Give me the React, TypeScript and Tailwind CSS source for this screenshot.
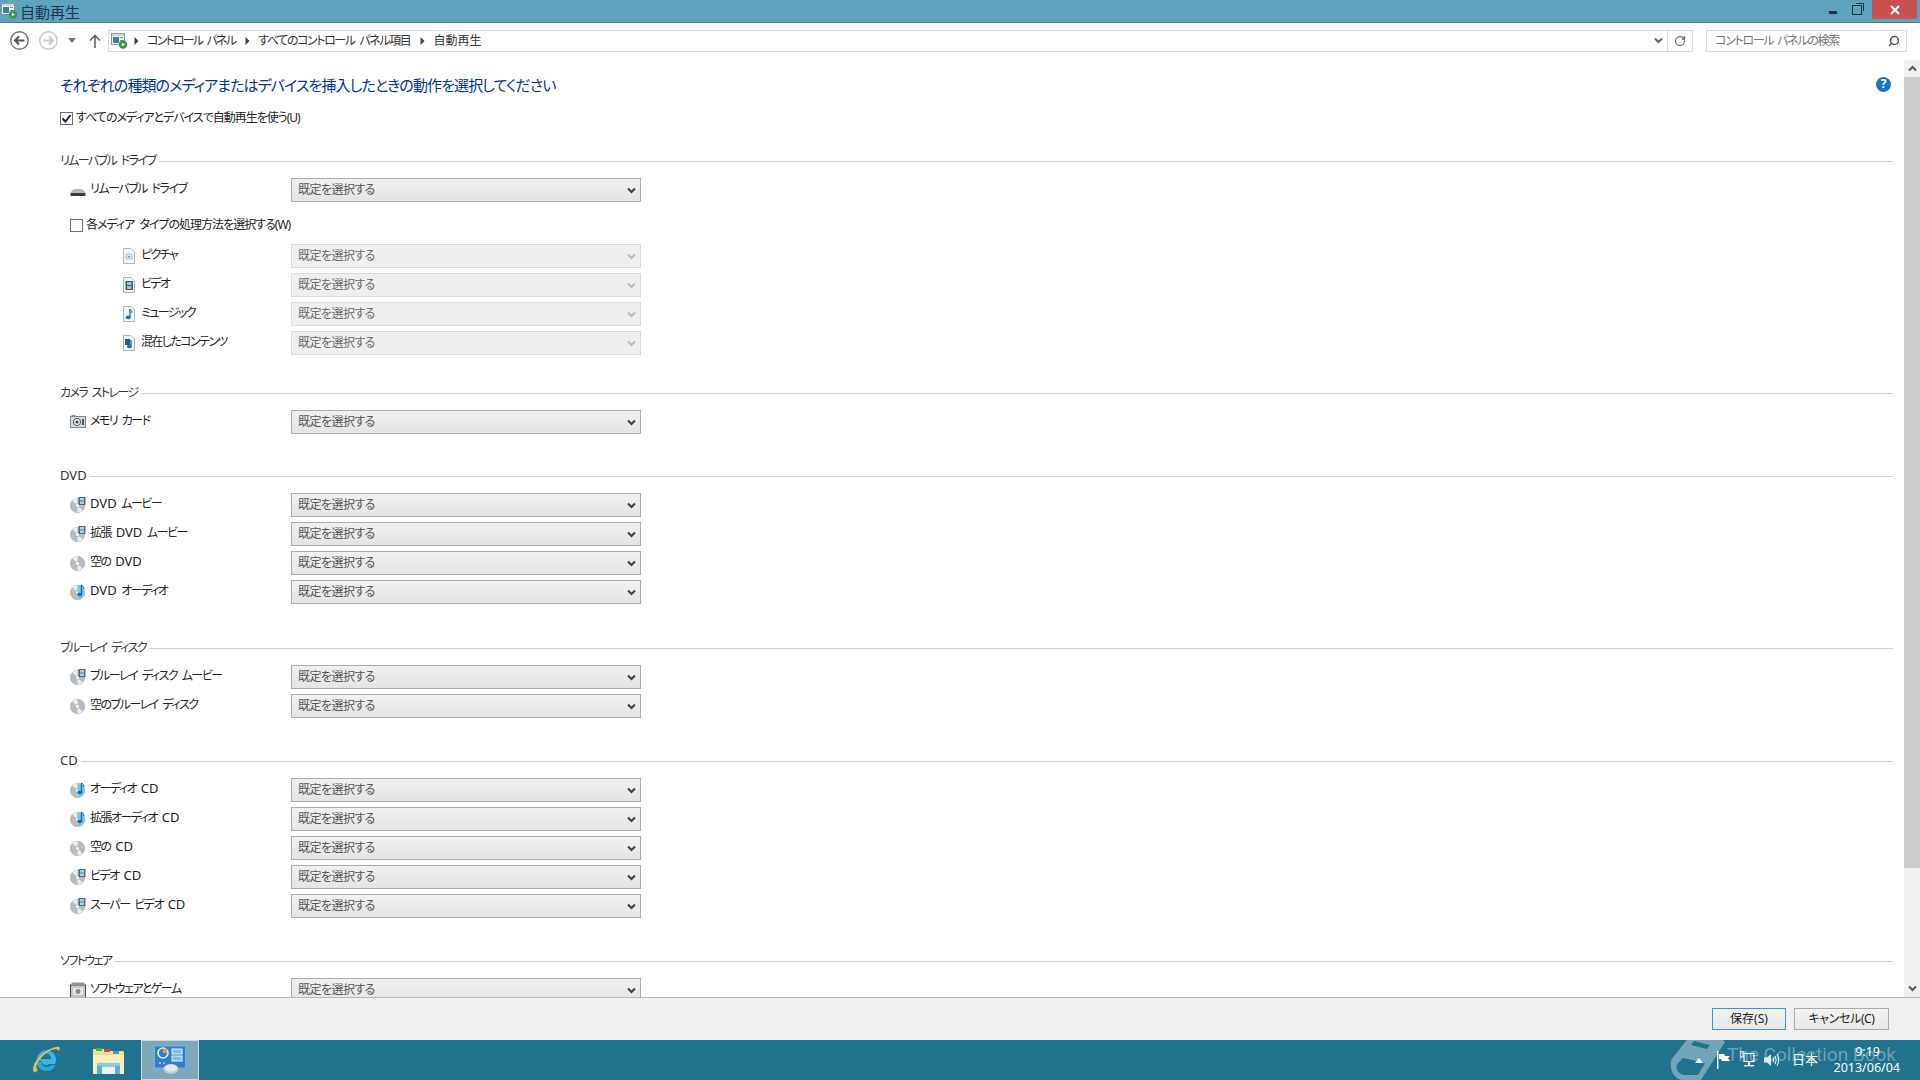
import { ChevronDown, RotateCw, Search } from "lucide-react";

type RowIcon = "drive" | "camera" | "film" | "blank" | "music" | "box";
type DocIcon = "picture" | "video" | "audio" | "mixed";

const FONT = "font-['Noto_Sans','Noto_Sans_CJK_JP',sans-serif] [font-feature-settings:'palt']";

function AppIcon() {
  return (
    <svg width="17" height="16" viewBox="0 0 17 16" className="shrink-0">
      <rect x="0.5" y="0.5" width="13" height="11" fill="#f4f6f8" stroke="#8b98a3" />
      <rect x="1" y="1" width="12" height="2" fill="#cfd8df" />
      <rect x="2" y="4" width="6" height="6" fill="#3f7f9b" />
      <rect x="9" y="4" width="3" height="1" fill="#7d8d99" />
      <rect x="9" y="7" width="3" height="1" fill="#7d8d99" />
      <circle cx="12" cy="11.5" r="4.2" fill="#2f9d3a" />
      <path d="M10.8 9.4 L14 11.5 L10.8 13.6 Z" fill="#fff" />
    </svg>
  );
}

function DiscBase() {
  return (
    <>
      <circle cx="7.5" cy="8.5" r="7.2" fill="#b9bcbe" stroke="#a2a5a7" strokeWidth="0.6" />
      <path d="M7.5 8.5 L2.5 3.4 A7.2 7.2 0 0 1 7.5 1.3 Z" fill="#eceeef" />
      <path d="M7.5 8.5 L12.5 13.6 A7.2 7.2 0 0 1 7.5 15.7 Z" fill="#eceeef" />
      <circle cx="7.5" cy="8.5" r="2" fill="#fff" stroke="#9a9d9f" strokeWidth="0.6" />
    </>
  );
}

function Icon({ kind }: { kind: RowIcon }) {
  if (kind === "drive") {
    return (
      <svg width="16" height="16" viewBox="0 0 16 16">
        <path d="M0.5 11 Q2 7.5 5 7 L11 7 Q14 7.5 15.5 11 Z" fill="#b9b9b9" />
        <rect x="0.5" y="11" width="15" height="3" rx="0.6" fill="#3b3b3b" />
      </svg>
    );
  }
  if (kind === "camera") {
    return (
      <svg width="16" height="16" viewBox="0 0 16 16">
        <rect x="0.5" y="2.5" width="15" height="11" fill="#d4dadf" stroke="#7d868d" />
        <rect x="1.5" y="1" width="4" height="2" fill="#8a9299" />
        <circle cx="7" cy="8" r="3.6" fill="#f3f5f6" stroke="#4d565d" />
        <circle cx="7" cy="8" r="1.6" fill="#3f484f" />
        <rect x="12" y="5" width="2" height="6" fill="#4d565d" />
      </svg>
    );
  }
  if (kind === "box") {
    return (
      <svg width="16" height="16" viewBox="0 0 16 16">
        <rect x="0.5" y="3" width="15" height="12.5" fill="#c3c8c4" stroke="#3d4245" />
        <rect x="1.5" y="0.5" width="13" height="3" fill="#8d9498" />
        <rect x="3" y="6" width="10" height="7" fill="#e8e6d8" />
        <circle cx="8" cy="9.5" r="2.4" fill="#7f8a83" />
      </svg>
    );
  }
  return (
    <svg width="16" height="16" viewBox="0 0 16 16">
      <DiscBase />
      {kind === "film" && (
        <>
          <rect x="8.5" y="0" width="7" height="8" fill="#4a6a85" />
          <rect x="10" y="1" width="4" height="2.6" fill="#b4cfe3" />
          <rect x="10" y="4.4" width="4" height="2.6" fill="#b4cfe3" />
        </>
      )}
      {kind === "music" && (
        <>
          <path d="M7.5 1.3 A7.2 7.2 0 0 1 14.7 8.5 A7.2 7.2 0 0 1 7.5 15.7 Z" fill="#7cc4ec" />
          <path d="M11.5 1 L11.5 10" stroke="#0f6fb0" strokeWidth="1.4" />
          <ellipse cx="9.8" cy="10.5" rx="2.4" ry="1.8" fill="#0f6fb0" />
          <path d="M11.5 1 Q14.5 2.5 14 5" stroke="#0f6fb0" strokeWidth="1" fill="none" />
        </>
      )}
    </svg>
  );
}

function PageIcon({ kind }: { kind: DocIcon }) {
  return (
    <svg width="14" height="16" viewBox="0 0 14 16">
      <path d="M1.5 0.5 H9 L12.5 4 V15.5 H1.5 Z" fill="#f5f6f7" stroke="#aeb4b8" />
      {kind === "picture" && (
        <>
          <rect x="4" y="6" width="6" height="5" fill="#dfe5ea" stroke="#9aa7b1" strokeWidth="0.6" />
          <rect x="6" y="8" width="2" height="1.5" fill="#7e97aa" />
        </>
      )}
      {kind === "video" && (
        <>
          <rect x="3.5" y="4" width="7.5" height="9" fill="#37566f" />
          <rect x="5" y="5" width="4.5" height="3" fill="#9fc0d8" />
          <rect x="5" y="9" width="4.5" height="3" fill="#9fc0d8" />
        </>
      )}
      {kind === "audio" && (
        <>
          <path d="M8 3 V11" stroke="#1877b8" strokeWidth="1.4" />
          <ellipse cx="6.2" cy="11.4" rx="2.5" ry="1.9" fill="#1877b8" />
          <path d="M8 3 Q10.5 4.5 10 7" stroke="#1877b8" strokeWidth="1" fill="none" />
        </>
      )}
      {kind === "mixed" && (
        <>
          <rect x="3" y="4" width="5" height="6" fill="#37566f" />
          <path d="M9 5 V11" stroke="#1877b8" strokeWidth="1.4" />
          <ellipse cx="7.4" cy="11.4" rx="2.4" ry="1.9" fill="#1877b8" />
        </>
      )}
    </svg>
  );
}

function SmallChevron({ className }: { className?: string }) {
  return (
    <svg width="9" height="7" viewBox="0 0 9 7" className={className}>
      <path d="M1 1.5 L4.5 5 L8 1.5" stroke="currentColor" strokeWidth="2" fill="none" />
    </svg>
  );
}

// latin words sit a bit larger than the narrow kana in the original UI font
function Label({ text, tracking }: { text: string; tracking: string }) {
  return (
    <span className={`[word-spacing:3px] ${tracking}`}>
      {text.split(/([A-Za-z]+)/).map((part, i) =>
        /^[A-Za-z]+$/.test(part) ? (
          <span key={i} className="text-[13px] tracking-normal">
            {part}
          </span>
        ) : (
          <span key={i}>{part}</span>
        ),
      )}
    </span>
  );
}

function Dropdown({ disabled }: { disabled?: boolean }) {
  return (
    <div
      className={
        disabled
          ? "ml-auto flex h-6 w-[350px] shrink-0 items-center justify-between border border-[#dadada] bg-[#efefef] pl-[6px] pr-[4px] text-xs text-[#6a6a6a]"
          : "ml-auto flex h-6 w-[350px] shrink-0 items-center justify-between border border-[#acacac] bg-gradient-to-b from-[#f1f1f1] to-[#e4e4e4] pl-[6px] pr-[4px] text-xs text-[#555]"
      }
    >
      <span className="tracking-[-0.55px]">既定を選択する</span>
      <SmallChevron className={disabled ? "text-[#bcbcbc]" : "text-[#3f3f3f]"} />
    </div>
  );
}

function Row({ icon, label }: { icon: RowIcon; label: string }) {
  return (
    <div className="flex h-6 w-[581px] items-center pl-[10px] text-xs text-[#222]">
      <div className="flex h-4 w-4 shrink-0 items-center justify-center">
        <Icon kind={icon} />
      </div>
      <span className="ml-1 -translate-y-px">
        <Label text={label} tracking="tracking-[-1.5px]" />
      </span>
      <Dropdown />
    </div>
  );
}

function DocRow({ icon, label }: { icon: DocIcon; label: string }) {
  return (
    <div className="flex h-6 w-[581px] items-center pl-[62px] text-xs text-[#222]">
      <PageIcon kind={icon} />
      <span className="ml-[5px] -translate-y-px tracking-[-1.6px]">{label}</span>
      <Dropdown disabled />
    </div>
  );
}

function Heading({ title }: { title: string }) {
  return (
    <div className="flex h-5 items-center gap-[3px] text-xs text-[#333]">
      <Label text={title} tracking="tracking-[-1.6px]" />
      <div className="h-px flex-1 bg-[#d2d2d2]" />
    </div>
  );
}

function Check({ checked }: { checked?: boolean }) {
  return (
    <div className="flex h-[13px] w-[13px] shrink-0 items-center justify-center border border-[#707070] bg-white">
      {checked && (
        <svg width="11" height="11" viewBox="0 0 11 11">
          <path d="M1.5 5.5 L4.5 8.5 L9.5 2" stroke="#222" strokeWidth="2" fill="none" />
        </svg>
      )}
    </div>
  );
}

function Section({ title, rows, className }: { title: string; rows: [RowIcon, string][]; className: string }) {
  return (
    <div className={className}>
      <Heading title={title} />
      <div className="mt-[7px] flex flex-col gap-[5px]">
        {rows.map((r) => (
          <Row key={r[1]} icon={r[0]} label={r[1]} />
        ))}
      </div>
    </div>
  );
}

function Crumb() {
  return (
    <svg width="5" height="8" viewBox="0 0 5 8" className="shrink-0">
      <path d="M0.5 0 L4.5 4 L0.5 8 Z" fill="#444" />
    </svg>
  );
}

function NavCircle({ dim, flip }: { dim?: boolean; flip?: boolean }) {
  const c = dim ? "#c4c8cc" : "#6f7478";
  return (
    <svg width="19" height="19" viewBox="0 0 19 19" className={flip ? "shrink-0 rotate-180" : "shrink-0"}>
      <circle cx="9.5" cy="9.5" r="8.7" fill="#fff" stroke={c} strokeWidth="1.4" />
      <path d="M14.5 9.5 H5.5 M9 5.5 L5 9.5 L9 13.5" stroke={dim ? "#c4c8cc" : "#555"} strokeWidth="2" fill="none" />
    </svg>
  );
}

function IeIcon() {
  return (
    <svg width="30" height="30" viewBox="0 0 30 30">
      <path d="M6 15 A9.5 9.5 0 1 1 24 19 L18 19 A4.5 4.5 0 0 1 10.5 16 Z" fill="#39b5ec" />
      <path
        d="M10 13.5 H20 A5.2 5.2 0 0 0 10 13.5 Z M7 17 H11 A5 5 0 0 0 20 20 H24.5 A9.8 9.8 0 0 1 6 19 Z"
        fill="#2aa6e2"
      />
      <rect x="10" y="12" width="10" height="2" fill="#1f6f8c" />
      <path d="M11 11 A4.5 4.5 0 0 1 19.5 12 H11 Z" fill="#1f7290" />
      <path
        d="M3 27 C-1 23 8 6 25 2 C29 1 29.5 3 28 6 C26 3 20 4 14 9 C7 15 3 23 7 25 C5 27 4 28 3 27 Z"
        fill="#e2c24c"
      />
    </svg>
  );
}

function FolderIcon() {
  return (
    <svg width="33" height="29" viewBox="0 0 33 29">
      <path d="M1 3 H13 L15 5 H31 Q32 5 32 7 V27 Q32 28 31 28 H2 Q1 28 1 27 Z" fill="#f3dd98" />
      <rect x="1" y="9" width="31" height="19" rx="1" fill="#fbeeb9" />
      <rect x="4" y="2" width="6" height="3" fill="#3fb24a" />
      <rect x="12" y="3" width="6" height="3" fill="#c94a3e" />
      <rect x="21" y="5" width="6" height="3" fill="#3b9edb" />
      <rect x="5" y="17" width="23" height="4" fill="#8fc8e8" />
      <rect x="5" y="20" width="5" height="8" fill="#5faed8" />
      <rect x="23" y="20" width="5" height="8" fill="#5faed8" />
      <rect x="10" y="23" width="13" height="5" fill="#eaf2f4" />
    </svg>
  );
}

function PanelIcon() {
  return (
    <svg width="32" height="30" viewBox="0 0 32 30">
      <rect x="0.5" y="1" width="31" height="22" fill="#2f7fcb" stroke="#6fb3e6" />
      <circle cx="9" cy="8" r="5" fill="none" stroke="#dff0fb" strokeWidth="1.6" />
      <circle cx="11" cy="6" r="2.4" fill="#f09a3c" />
      <rect x="18" y="4" width="10" height="5" fill="#7cc0ee" stroke="#e6f4fc" />
      <rect x="18" y="11" width="10" height="5" fill="#7cc0ee" stroke="#e6f4fc" />
      <circle cx="6" cy="18" r="1" fill="#f3d268" />
      <circle cx="10" cy="18" r="1" fill="#9fd8f5" />
      <ellipse cx="17" cy="24" rx="7.5" ry="5" fill="#c9ccce" />
      <ellipse cx="17" cy="23" rx="6" ry="3.4" fill="#e4e6e7" />
    </svg>
  );
}

function TrayIcons() {
  return (
    <div className="flex items-center">
      <svg width="8" height="5" viewBox="0 0 8 5" className="mt-px">
        <path d="M0 5 L4 0 L8 5 Z" fill="#fff" />
      </svg>
      <svg width="14" height="18" viewBox="0 0 14 18" className="ml-[14px]">
        <rect x="0" y="0" width="1.4" height="18" fill="#fff" />
        <path d="M2 3 H7 L8 5 H13 L11 7.5 L13 10 H5 L4 8 H2 Z" fill="#fff" />
      </svg>
      <svg width="15" height="18" viewBox="0 0 15 18" className="ml-[9px]">
        <rect x="4" y="2.5" width="10" height="8" fill="none" stroke="#fff" strokeWidth="1.2" />
        <rect x="0" y="0" width="3" height="6" fill="none" stroke="#fff" />
        <rect x="8" y="10" width="2" height="4" fill="#fff" />
        <rect x="4" y="14" width="10" height="1.4" fill="#fff" />
      </svg>
      <svg width="16" height="16" viewBox="0 0 16 16" className="ml-[9px]">
        <path d="M0 5.5 H3 L7 2 V14 L3 10.5 H0 Z" fill="#d9e6ec" />
        <path d="M9 5.5 Q10.5 8 9 10.5 M11 3.8 Q13.5 8 11 12.2 M13 2.2 Q16.2 8 13 13.8" stroke="#fff" fill="none" />
      </svg>
    </div>
  );
}

function Watermark() {
  return (
    <div className="pointer-events-none absolute bottom-0 right-[24px] flex h-[48px] items-start gap-[2px] overflow-hidden">
      <svg width="56" height="48" viewBox="0 0 56 48" className="opacity-40">
        <path
          d="M24 0 L52 6 L56 10 L32 48 L12 48 Q0 44 2 28 Z M25 9 L41 13 L38 17 L22 13 Z M8 32 Q6 40 14 43 L29 43 L36 31 L14 26 Z"
          fill="#eef3f5"
          fillRule="evenodd"
        />
      </svg>
      <span className="mt-[9px] font-['Roboto',sans-serif] text-[19px] leading-7 text-white/35">
        The Collection Book
      </span>
    </div>
  );
}

export default function App() {
  return (
    <div className={`relative flex h-screen w-[1920px] flex-col overflow-hidden bg-white ${FONT}`}>
      {/* title bar */}
      <div className="flex h-[23px] shrink-0 items-start border-b border-[#4a8198] bg-[#5ea3bd]">
        <div className="ml-[1px] mt-[3px]">
          <AppIcon />
        </div>
        <span className="ml-[2px] text-[15px] leading-[24px] text-[#17394a]">自動再生</span>
        <div className="ml-auto flex items-start">
          <div className="mr-[15px] mt-[11px] h-[3px] w-[8px] bg-[#22303a]" />
          <div className="relative mr-[10px] mt-[5px] h-[10px] w-[10px] border border-[#22303a]">
            <div className="absolute -right-[3px] -top-[3px] h-[8px] w-[8px] border border-b-0 border-l-0 border-[#22303a]" />
          </div>
          <div className="mr-[3px] flex h-[19px] w-[45px] items-center justify-center bg-[#c75050]">
            <svg width="10" height="10" viewBox="0 0 10 10">
              <path d="M1 1 L9 9 M9 1 L1 9" stroke="#fff" strokeWidth="2" />
            </svg>
          </div>
        </div>
      </div>

      {/* address bar */}
      <div className="flex h-[35px] shrink-0 items-center bg-white text-xs text-[#333]">
        <div className="ml-[10px]">
          <NavCircle />
        </div>
        <div className="ml-[10px]">
          <NavCircle dim flip />
        </div>
        <svg width="8" height="5" viewBox="0 0 8 5" className="ml-[10px]">
          <path d="M0 0 H8 L4 5 Z" fill="#777" />
        </svg>
        <svg width="12" height="14" viewBox="0 0 12 14" className="ml-[13px]">
          <path d="M6 14 V2 M1 6.5 L6 1.5 L11 6.5" stroke="#666" strokeWidth="1.6" fill="none" />
        </svg>
        <div className="ml-[7px] flex h-[22px] w-[1585px] items-center border border-[#d9d9e2]">
          <div className="ml-[2px]">
            <AppIcon />
          </div>
          <div className="ml-[6px]">
            <Crumb />
          </div>
          <span className="ml-[8px] tracking-[-1.8px] [word-spacing:3px]">コントロール パネル</span>
          <div className="ml-[10px]">
            <Crumb />
          </div>
          <span className="ml-[8px] tracking-[-1.4px] [word-spacing:3px]">すべてのコントロール パネル項目</span>
          <div className="ml-[10px]">
            <Crumb />
          </div>
          <span className="ml-[8px]">自動再生</span>
          <SmallChevron className="ml-auto mr-[4px] text-[#666]" />
          <div className="flex h-full w-[25px] items-center justify-center border-l border-[#d9d9e2]">
            <RotateCw size={12} strokeWidth={2.5} className="text-[#666]" />
          </div>
        </div>
        <div className="ml-[13px] flex h-[22px] w-[201px] items-center justify-between border border-[#d9d9e2] pl-2 pr-[6px] text-[#777]">
          <span className="tracking-[-1.3px] [word-spacing:2px]">コントロール パネルの検索</span>
          <Search size={12} strokeWidth={3} className="-scale-x-100 text-[#555]" />
        </div>
      </div>

      {/* main content */}
      <div className="flex min-h-0 flex-1">
        <div className="flex-1 overflow-hidden pl-[60px] pr-[11px] pt-[15px]">
          <div className="flex h-6 items-center justify-between">
            <span className="text-[15px] tracking-[-0.9px] text-[#003399]">
              それぞれの種類のメディアまたはデバイスを挿入したときの動作を選択してください
            </span>
            <div className="mr-[2px] flex h-[15px] w-[15px] -translate-y-px items-center justify-center rounded-full bg-[#1b75c4] text-[12px] font-bold leading-none text-white">
              ?
            </div>
          </div>
          <div className="mt-[11px] flex h-5 items-center gap-[3px] text-xs text-[#222]">
            <Check checked />
            <span className="tracking-[-1px]">すべてのメディアとデバイスで自動再生を使う(U)</span>
          </div>

          <div className="mt-[23px]">
            <Heading title="リムーバブル ドライブ" />
            <div className="mt-[7px]">
              <Row icon="drive" label="リムーバブル ドライブ" />
            </div>
            <div className="mt-[13px] flex h-5 items-center gap-[3px] pl-[10px] text-xs text-[#222]">
              <Check />
              <span className="tracking-[-1px] [word-spacing:3px]">各メディア タイプの処理方法を選択する(W)</span>
            </div>
            <div className="mt-[9px] flex flex-col gap-[5px]">
              <DocRow icon="picture" label="ピクチャ" />
              <DocRow icon="video" label="ビデオ" />
              <DocRow icon="audio" label="ミュージック" />
              <DocRow icon="mixed" label="混在したコンテンツ" />
            </div>
          </div>

          <Section className="mt-[28px]" title="カメラ ストレージ" rows={[["camera", "メモリ カード"]]} />
          <Section
            className="mt-[32px]"
            title="DVD"
            rows={[
              ["film", "DVD ムービー"],
              ["film", "拡張 DVD ムービー"],
              ["blank", "空の DVD"],
              ["music", "DVD オーディオ"],
            ]}
          />
          <Section
            className="mt-[34px]"
            title="ブルーレイ ディスク"
            rows={[
              ["film", "ブルーレイ ディスク ムービー"],
              ["blank", "空のブルーレイ ディスク"],
            ]}
          />
          <Section
            className="mt-[33px]"
            title="CD"
            rows={[
              ["music", "オーディオ CD"],
              ["music", "拡張オーディオ CD"],
              ["blank", "空の CD"],
              ["film", "ビデオ CD"],
              ["film", "スーパー ビデオ CD"],
            ]}
          />
          <Section className="mt-[33px]" title="ソフトウェア" rows={[["box", "ソフトウェアとゲーム"]]} />
        </div>

        {/* scrollbar */}
        <div className="mt-[2px] flex w-4 shrink-0 flex-col bg-[#f0f0f0]">
          <div className="flex h-[17px] items-center justify-center">
            <SmallChevron className="rotate-180 text-[#555]" />
          </div>
          <div className="h-[791px] bg-[#cdcdcd]" />
          <div className="mt-auto flex h-[17px] items-center justify-center">
            <SmallChevron className="text-[#555]" />
          </div>
        </div>
      </div>

      {/* footer */}
      <div className="flex h-[43px] shrink-0 items-center justify-end gap-2 border-t border-[#b9b9b9] bg-[#f0f0f0] pr-[31px] text-xs text-[#222]">
        <div className="flex h-[22px] w-[74px] items-center justify-center border border-[#3a95dd] bg-gradient-to-b from-[#f4f4f4] to-[#e8e8e8]">
          保存(S)
        </div>
        <div className="flex h-[22px] w-[95px] items-center justify-center border border-[#acacac] bg-gradient-to-b from-[#f4f4f4] to-[#e8e8e8] tracking-[-0.4px]">
          キャンセル(C)
        </div>
      </div>

      {/* taskbar */}
      <div className="relative flex h-10 shrink-0 items-center gap-1 bg-[#20728f] pl-[17px] text-white">
        <div className="flex h-full w-[58px] items-center justify-center">
          <IeIcon />
        </div>
        <div className="flex h-full w-[58px] items-center justify-center">
          <FolderIcon />
        </div>
        <div className="flex h-full w-[58px] items-center justify-center border border-[#c5dbe4] bg-[#7ea9ba]">
          <PanelIcon />
        </div>
        <div className="ml-auto flex items-center pr-5">
          <TrayIcons />
          <span className="ml-[12px] text-[13px]">日本</span>
          <div className="ml-[16px] flex w-[66px] flex-col items-end text-[12.5px] leading-4">
            <span className="pr-5">9:19</span>
            <span>2013/06/04</span>
          </div>
        </div>
      </div>
      <Watermark />
    </div>
  );
}
